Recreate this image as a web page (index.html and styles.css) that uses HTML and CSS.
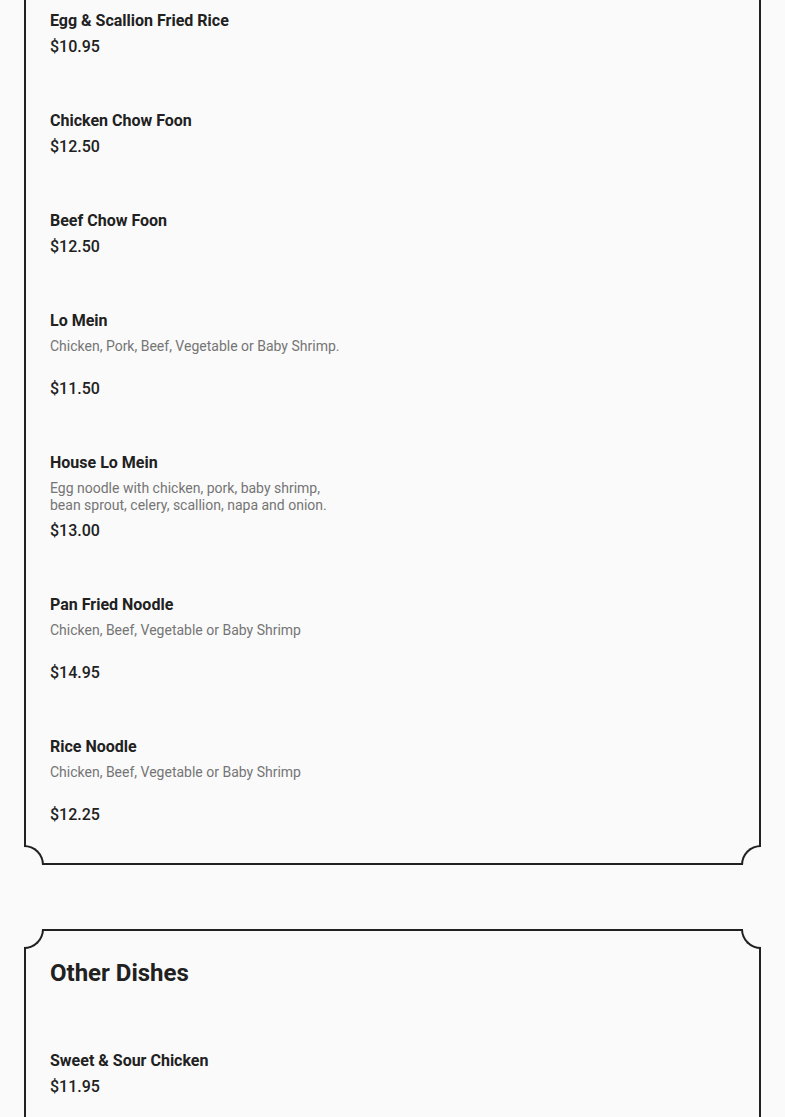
FILE: index.html
```html
<!DOCTYPE html>
<html lang="en">
<head>
<meta charset="utf-8">
<title>Menu</title>
<link rel="stylesheet" href="styles.css">
</head>
<body>
<section class="card card--continued">
  <span class="corner corner--bl"></span>
  <span class="corner corner--br"></span>
  <div class="item">
    <div class="item__name">Egg &amp; Scallion Fried Rice</div>
    <div class="item__price">$10.95</div>
  </div>
  <div class="item">
    <div class="item__name">Chicken Chow Foon</div>
    <div class="item__price">$12.50</div>
  </div>
  <div class="item">
    <div class="item__name">Beef Chow Foon</div>
    <div class="item__price">$12.50</div>
  </div>
  <div class="item">
    <div class="item__name">Lo Mein</div>
    <div class="item__desc">Chicken, Pork, Beef, Vegetable or Baby Shrimp.</div>
    <div class="item__price">$11.50</div>
  </div>
  <div class="item">
    <div class="item__name">House Lo Mein</div>
    <div class="item__desc">Egg noodle with chicken, pork, baby shrimp, bean sprout, celery, scallion, napa and onion.</div>
    <div class="item__price">$13.00</div>
  </div>
  <div class="item">
    <div class="item__name">Pan Fried Noodle</div>
    <div class="item__desc">Chicken, Beef, Vegetable or Baby Shrimp</div>
    <div class="item__price">$14.95</div>
  </div>
  <div class="item">
    <div class="item__name">Rice Noodle</div>
    <div class="item__desc">Chicken, Beef, Vegetable or Baby Shrimp</div>
    <div class="item__price">$12.25</div>
  </div>
</section>

<section class="card card--open">
  <span class="corner corner--tl"></span>
  <span class="corner corner--tr"></span>
  <h2 class="card__title">Other Dishes</h2>
  <div class="item">
    <div class="item__name">Sweet &amp; Sour Chicken</div>
    <div class="item__price">$11.95</div>
  </div>
</section>
</body>
</html>
```

FILE: styles.css
```css
html, body {
  background: #fafafa;
}
body {
  margin: 0 24px;
  font-family: Roboto, "Liberation Sans", Arial, sans-serif;
  color: #212121;
}
.card {
  position: relative;
  border: 2px solid #212121;
  padding: 0 24px;
}
.card--continued {
  border-top: none;
  padding-top: 8.5px;
  padding-bottom: 37px;
  margin-bottom: 64px;
}
.card--open {
  border-bottom: none;
  padding-top: 26px;
  min-height: 300px;
}
.corner {
  position: absolute;
  width: 20px;
  height: 20px;
  box-sizing: border-box;
  background: #fafafa;
  border: 0 solid #212121;
}
.corner--bl {
  left: -2px;
  bottom: -2px;
  border-top-width: 2px;
  border-right-width: 2px;
  border-top-right-radius: 20px;
}
.corner--br {
  right: -2px;
  bottom: -2px;
  border-top-width: 2px;
  border-left-width: 2px;
  border-top-left-radius: 20px;
}
.corner--tl {
  left: -2px;
  top: -2px;
  border-bottom-width: 2px;
  border-right-width: 2px;
  border-bottom-right-radius: 20px;
}
.corner--tr {
  right: -2px;
  top: -2px;
  border-bottom-width: 2px;
  border-left-width: 2px;
  border-bottom-left-radius: 20px;
}
.card__title {
  margin: 0 0 59px;
  font-size: 24px;
  line-height: 33px;
  font-weight: 700;
}
.item {
  display: flex;
  flex-direction: column;
  margin-bottom: 51px;
}
.item:last-child {
  margin-bottom: 0;
}
.item__name {
  font-size: 16px;
  line-height: 23px;
  font-weight: 700;
}
.item__desc {
  width: 300px;
  min-height: 34px;
  margin-top: 6px;
  font-size: 14px;
  line-height: 17px;
  color: #757575;
}
.item__price {
  margin-top: 3px;
  font-size: 16px;
  line-height: 23px;
  font-weight: 500;
}
.item__desc + .item__price {
  margin-top: 5px;
}
```
